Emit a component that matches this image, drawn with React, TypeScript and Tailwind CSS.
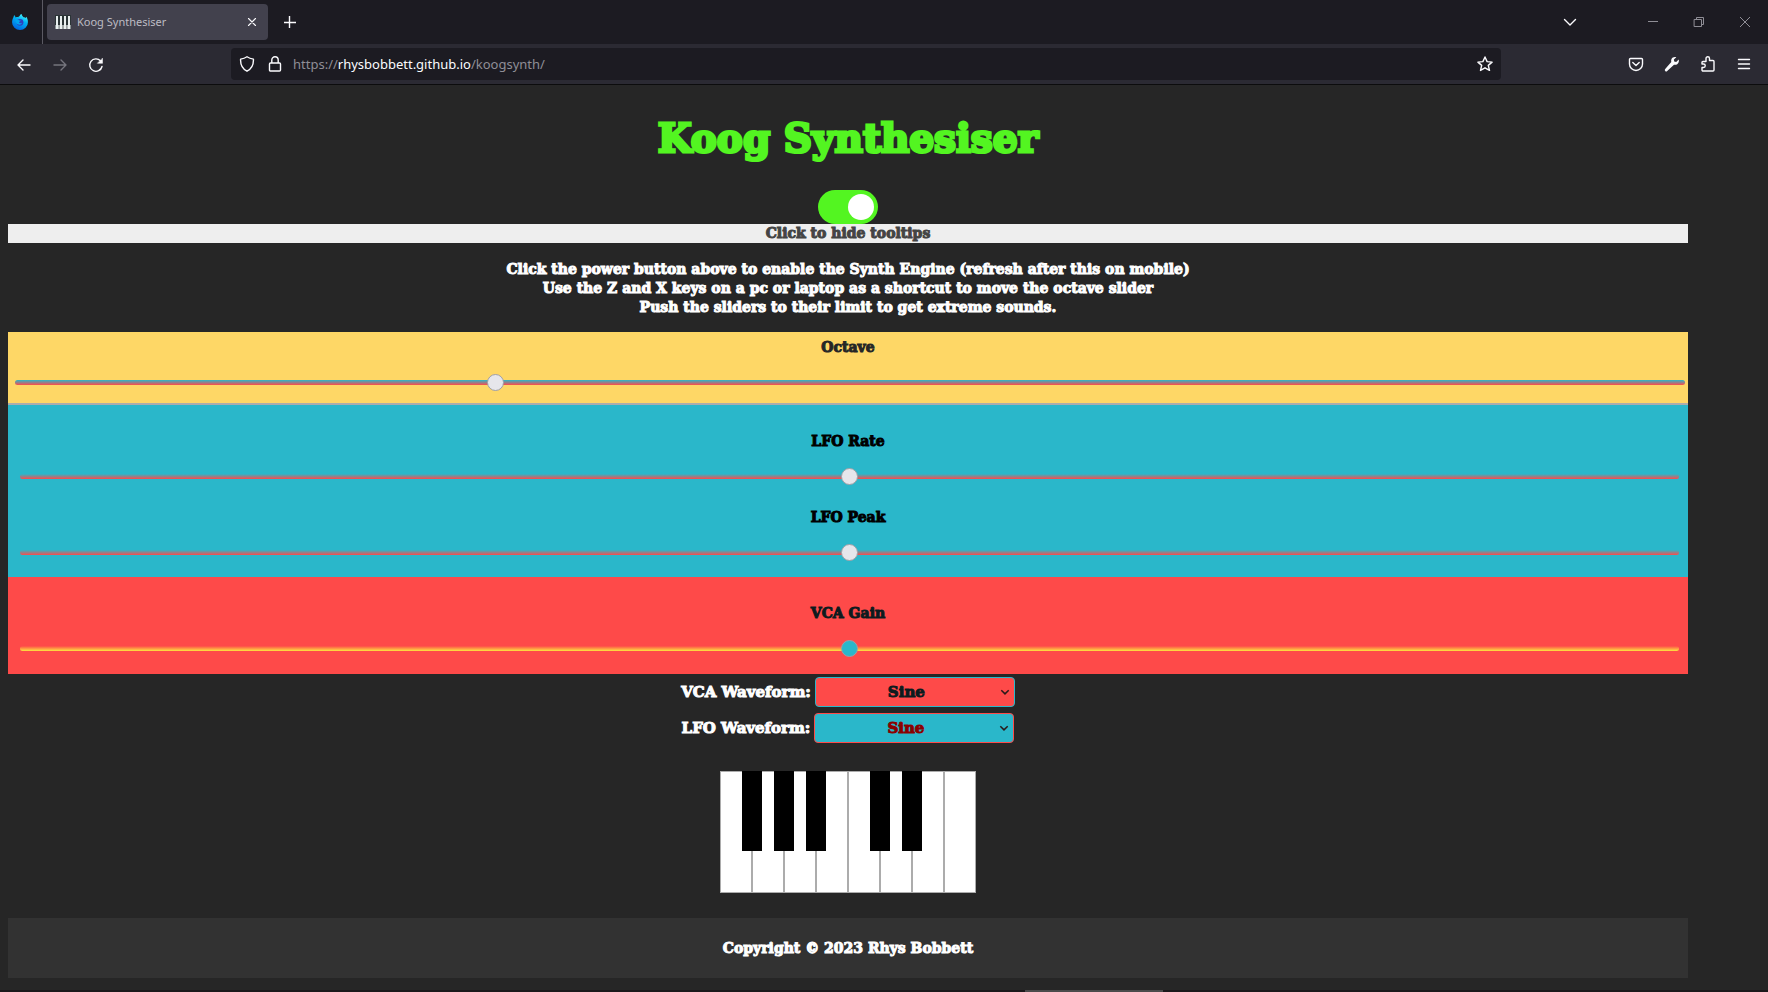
import React from "react";

type SliderProps = {
  id: string;
  label: string;
  value: number;
  max: number;
  look: string;
  inset?: string;
  labelColor?: string;
};

const sliderBase =
  "block h-[17px] w-full appearance-none bg-transparent [&::-webkit-slider-runnable-track]:h-[5px] [&::-webkit-slider-runnable-track]:rounded-[3px] [&::-webkit-slider-runnable-track]:bg-linear-to-b/srgb [&::-webkit-slider-thumb]:-mt-[6px] [&::-webkit-slider-thumb]:size-[17px] [&::-webkit-slider-thumb]:appearance-none [&::-webkit-slider-thumb]:rounded-full [&::-webkit-slider-thumb]:border [&::-webkit-slider-thumb]:border-[#9f9fa6]";
const coolTrack =
  "[&::-webkit-slider-runnable-track]:from-[#2ab7ca] [&::-webkit-slider-runnable-track]:to-[#fe4a49] [&::-webkit-slider-thumb]:bg-[#e6e6eb]";
const warmTrack =
  "[&::-webkit-slider-runnable-track]:from-[#fe4a49] [&::-webkit-slider-runnable-track]:to-[#fee440] [&::-webkit-slider-thumb]:bg-[#2ab7ca]";

function Slider({ id, label, value, max, look, inset = "pl-3 pr-[9px]", labelColor = "text-black" }: SliderProps) {
  return (
    <div className="flex flex-col">
      <label htmlFor={id} className={"text-center " + labelColor}>
        {label}
      </label>
      <div className={"pt-[17px] " + inset}>
        <input id={id} type="range" min={0} max={max} step="any" defaultValue={value} className={sliderBase + " " + look} />
      </div>
    </div>
  );
}

function FirefoxLogo() {
  return (
    <svg viewBox="0 0 16 16" className="size-4" aria-hidden="true">
      <defs>
        <linearGradient id="flame" x1="0.8" y1="0" x2="0.3" y2="1">
          <stop offset="0" stopColor="#54ffff" />
          <stop offset="0.4" stopColor="#00b3f4" />
          <stop offset="1" stopColor="#0060df" />
        </linearGradient>
      </defs>
      <path
        fill="url(#flame)"
        d="M9.600 0c.2 1.500 1 2.200 2 3.300.9-.2 1.500.1 2 .7l.7-1.200c1.200 1.700 1.700 3.600 1.600 5.600A7.900 7.600 0 0 1 .1 8.400c0-2 .4-3.500 1.300-5.100l.8-2.300c.7.900 1.200 1.600 1.500 2.600C4.500 3.100 5.300 3 6.200 3.200 6.600 2.400 7 2.100 7.700 1.900 7.800 1.100 8.600.4 9.600 0z"
      />
      <circle cx="8" cy="8.300" r="3.400" fill="#2f3fc0" />
      <path fill="#00a3f0" d="M3.800 6.200c1.500-.9 2.900-.7 3.500.2l1.500.2c-.2 1-1.500 1.100-1.800 1.800.4 1 2 1 3 .4-.4 1.500-2 2.200-3.500 1.800C4.500 10.200 3.400 8 3.800 6.200z" />
    </svg>
  );
}

const icon = {
  fill: "none",
  stroke: "currentColor",
  strokeWidth: 1.4,
  strokeLinecap: "round" as const,
  strokeLinejoin: "round" as const,
  viewBox: "0 0 16 16",
  className: "size-4",
  "aria-hidden": true,
};

function TabBar() {
  return (
    <div className="flex h-11 items-center bg-[#1c1b22] text-[#fbfbfe]">
      <div className="flex h-full w-[43px] items-center border-r border-[#5b5a63] pl-3">
        <FirefoxLogo />
      </div>
      <div className="ml-1 flex h-9 w-[221px] items-center rounded bg-[#42414d] pr-2 pl-2">
        <svg viewBox="0 0 16 16" className="size-4" aria-hidden="true">
          <rect y="1" width="16" height="14" fill="#2b3436" />
          <path fill="#e9efef" d="M1 2h2v13H1zM5 2h2v13H5zM9 2h2v13H9zM13 2h2v13h-2z" />
          <path fill="#e9efef" d="M.500 11h3.200v4H.500zM4.400 11h3.200v4H4.400zM8.400 11h3.200v4H8.400zM12.300 11h3.200v4h-3.200z" />
        </svg>
        <span className="ml-[6px] flex-1 text-[11px] text-[#bdbcc4]">Koog Synthesiser</span>
        <button aria-label="Close tab" className="flex size-4 items-center justify-center">
          <svg {...icon} strokeWidth={1.1}>
            <path d="M4.500 4.500l7 7M11.500 4.500l-7 7" />
          </svg>
        </button>
      </div>
      <button aria-label="New tab" className="ml-[14px]">
        <svg {...icon} strokeLinecap="butt">
          <path d="M7.500 2v12M2 8.500h12" />
        </svg>
      </button>
      <div className="ml-auto flex items-center pr-[15px]">
        <button aria-label="List all tabs" className="mr-[67px]">
          <svg {...icon}>
            <path d="M2.500 5.500L8 11l5.500-5.500" />
          </svg>
        </button>
        <div className="flex items-center gap-[30px] text-[#8f8e96]">
          <button aria-label="Minimise">
            <svg {...icon} strokeWidth={1} strokeLinecap="butt">
              <path d="M3 7.500h10" />
            </svg>
          </button>
          <button aria-label="Restore">
            <svg {...icon} strokeWidth={1} strokeLinejoin="miter">
              <path d="M3.500 5.500h7v7h-7zM5.500 5.500v-2h7v7h-2" />
            </svg>
          </button>
          <button aria-label="Close window">
            <svg {...icon} strokeWidth={1} strokeLinecap="butt">
              <path d="M3 3l10 10M13 3L3 13" />
            </svg>
          </button>
        </div>
      </div>
    </div>
  );
}

function NavBar() {
  return (
    <div className="flex h-[41px] items-center border-b border-[#0c0c0d] bg-[#2b2a33] text-[#fbfbfe]">
      <div className="flex w-[231px] gap-5 pt-px pl-4">
        <button aria-label="Back">
          <svg {...icon}>
            <path d="M14 8H2M7 3L2 8l5 5" />
          </svg>
        </button>
        <button aria-label="Forward" className="text-[#76757e]">
          <svg {...icon}>
            <path d="M2 8h12M9 3l5 5-5 5" />
          </svg>
        </button>
        <button aria-label="Reload">
          <svg {...icon}>
            <path d="M14 9.500A6.200 6.200 0 1 1 12.600 4" />
            <path d="M14.500 1.500v4.800H9.700z" fill="currentColor" strokeWidth="0.500" />
          </svg>
        </button>
      </div>
      <div className="flex h-8 flex-1 items-center rounded bg-[#1c1b22] px-2">
        <svg {...icon}>
          <path d="M8 .8c2 1.400 4 2 6.400 2.300.3 5.200-1.700 9.600-6.400 12.100C3.300 12.700 1.300 8.300 1.600 3.100 4 2.800 6 2.200 8 .8z" />
        </svg>
        <svg {...icon} className="ml-3 size-4">
          <path d="M3.500 7h9a1 1 0 0 1 1 1v6a1 1 0 0 1-1 1h-9a1 1 0 0 1-1-1V8a1 1 0 0 1 1-1zM4.800 7V4a3.200 3.200 0 0 1 6.400 0v3" />
        </svg>
        <span className="ml-[10px] pt-[2px] text-[13px] text-[#8f8e96]">
          https://<span className="text-[#fbfbfe]">rhysbobbett.github.io</span>/koogsynth/
        </span>
        <button aria-label="Bookmark this page" className="ml-auto">
          <svg {...icon}>
            <path d="M8 1l2.100 4.600 5 .5-3.800 3.300 1.200 5L8 11.800l-4.500 2.600 1.200-5L.9 6.100l5-.5z" />
          </svg>
        </button>
      </div>
      <div className="flex gap-5 pr-4 pl-[127px]">
        <button aria-label="Save to Pocket">
          <svg {...icon}>
            <path d="M2.500 2.500h11a1 1 0 0 1 1 1V8a6.500 6.500 0 0 1-13 0V3.500a1 1 0 0 1 1-1zM4.800 6.500L8 9.500l3.200-3" />
          </svg>
        </button>
        <button aria-label="Developer tools">
          <svg {...icon} fill="currentColor" stroke="none">
            <path d="M14.700 3.600l-2.500 2.300-2-.4-.3-1.900L12.300 1.200C10.300.6 8.200 1.300 7.400 3.200c-.4 1-.4 1.900-.1 2.800L1.200 13a1.400 1.400 0 0 0 2 2l6.800-6.300c1 .3 2.200.2 3.200-.5 1.500-1 2.100-2.900 1.500-4.600z" />
          </svg>
        </button>
        <button aria-label="Extensions">
          <svg {...icon}>
            <path d="M6 4V2.500a1.500 1.500 0 0 1 3.500 0V4.500H13a1 1 0 0 1 1 1V14a1 1 0 0 1-1 1H3a1 1 0 0 1-1-1v-2.500h1.500a1.500 1.500 0 0 0 0-3.500H2V6.500a1 1 0 0 1 1-1h3z" />
          </svg>
        </button>
        <button aria-label="Open menu">
          <svg {...icon}>
            <path d="M2.500 3.500h11M2.500 8h11M2.500 12.500h11" />
          </svg>
        </button>
      </div>
    </div>
  );
}

type WaveProps = { id: string; label: string; look: string };

function WaveSelect({ id, label, look }: WaveProps) {
  return (
    <div className="flex h-9 items-center justify-center gap-1 text-[15px]">
      <label htmlFor={id} className="text-white">
        {label}
      </label>
      <div className="relative">
        <select
          id={id}
          defaultValue="Sine"
          className={"h-[30px] w-[200px] appearance-none rounded border pr-[17px] text-center [text-align-last:center] " + look}
        >
          <option>Sine</option>
          <option>Square</option>
          <option>Sawtooth</option>
          <option>Triangle</option>
        </select>
        <svg
          viewBox="0 0 10 10"
          className="pointer-events-none absolute top-[10px] right-[5px] size-[10px] text-[#2a1a1a]"
          fill="none"
          stroke="currentColor"
          strokeWidth="1.500"
          aria-hidden="true"
        >
          <path d="M1.300 3.200L5 6.900l3.700-3.700" />
        </svg>
      </div>
    </div>
  );
}

const whiteKeys = ["C", "D", "E", "F", "G", "A", "B", "C2"];
const sharps = ["C", "D", "E", "G", "A"];

function Piano() {
  return (
    <div className="flex justify-center">
      {whiteKeys.map((key) => (
        <div key={key} className="relative">
          <button aria-label={key} className="block h-[122px] w-8 border border-[#acacac] bg-white" />
          {sharps.includes(key) && (
            <button aria-label={key + " sharp"} className="absolute top-0 left-[22px] z-10 h-20 w-5 bg-black" />
          )}
        </div>
      ))}
    </div>
  );
}

export default function App() {
  return (
    <div className="flex min-h-screen flex-col bg-[#262626] font-['Noto_Sans',sans-serif]">
      <TabBar />
      <NavBar />
      <main className="flex flex-1 flex-col pr-20 pl-2 font-['DejaVu_Serif',serif] text-[14px] leading-[19px] font-bold [-webkit-text-stroke:1px_currentColor]">
        <h1 className="pt-[27px] text-center text-[39px] leading-[52px] text-[#53f521] [-webkit-text-stroke:3px_currentColor]">
          Koog Synthesiser
        </h1>
        <div className="flex justify-center pt-[26px]">
          <label className="flex h-[34px] w-[60px] items-center justify-end rounded-full bg-[#53f521] p-1">
            <input type="checkbox" defaultChecked aria-label="Power" className="sr-only" />
            <span className="size-[26px] rounded-full bg-white" />
          </label>
        </div>
        <button className="h-[19px] bg-[#eeeeee] text-[#444444]">Click to hide tooltips</button>
        <p className="pt-[17px] pb-[15px] text-center text-white">
          Click the power button above to enable the Synth Engine (refresh after this on mobile)
          <br />
          Use the Z and X keys on a pc or laptop as a shortcut to move the octave slider
          <br />
          Push the sliders to their limit to get extreme sounds.
        </p>
        <section className="h-[73px] border-b-2 border-[#acacac] bg-[#fed766] pt-[6px]">
          <Slider id="octave" label="Octave" value={2} max={7} look={coolTrack} inset="pl-[7px] pr-[3px]" labelColor="text-[#262626]" />
        </section>
        <section className="flex h-[172px] flex-col gap-[23px] bg-[#2ab7ca] pt-[27px]">
          <Slider id="lfo-rate" label="LFO Rate" value={50} max={100} look={coolTrack} />
          <Slider id="lfo-peak" label="LFO Peak" value={50} max={100} look={coolTrack} />
        </section>
        <section className="h-[97px] bg-[#fe4a49] pt-[27px]">
          <Slider id="vca-gain" label="VCA Gain" value={50} max={100} look={warmTrack} labelColor="text-[#0d1b1e]" />
        </section>
        <WaveSelect id="vca-wave" label="VCA Waveform:" look="border-[#2ab7ca] bg-[#fe4a49] text-[#0d1b1e]" />
        <WaveSelect id="lfo-wave" label="LFO Waveform:" look="border-[#fe4a49] bg-[#2ab7ca] text-[#8b0000]" />
        <div className="py-[25px]">
          <Piano />
        </div>
        <footer className="flex h-[60px] items-center justify-center bg-[#323232] text-white">
          <p>Copyright © 2023 Rhys Bobbett</p>
        </footer>
      </main>
      <div className="flex h-[2px] bg-[#1b191b]">
        <div className="ml-[58%] w-[138px] bg-[#4b4b4b]" />
      </div>
    </div>
  );
}
